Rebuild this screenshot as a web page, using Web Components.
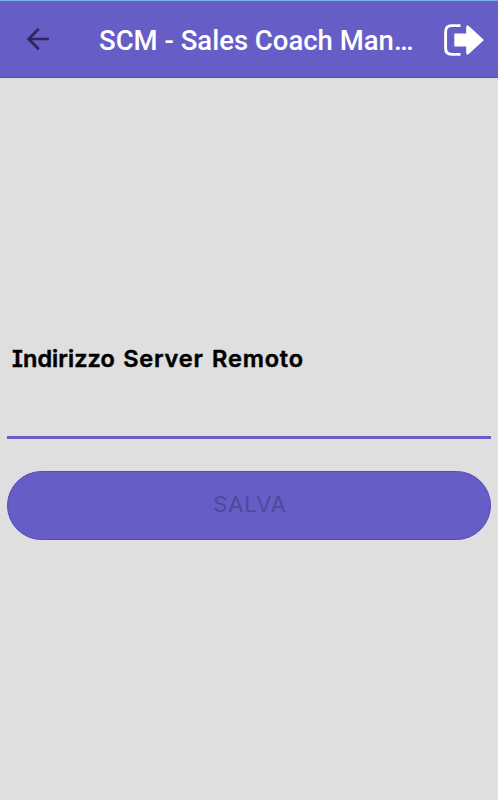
<!DOCTYPE html>
<html lang="it">
<head>
<meta charset="utf-8">
<meta name="viewport" content="width=device-width, initial-scale=1">
<title>SCM - Sales Coach Manager</title>
<style>
  body { margin: 0; background: #dfdfdf; }
</style>
</head>
<body>
<scm-screen>
  <app-bar slot="header">SCM - Sales Coach Manager</app-bar>
  <text-field><span>Indirizzo</span> Server Remoto</text-field>
  <pill-button>SALVA</pill-button>
</scm-screen>

<template id="screen-template">
  <style>
    :host {
      --primary: #675dc6;
      --primary-dark: #5746bd;
      display: flex;
      flex-direction: column;
      height: 100vh;
      box-sizing: border-box;
      border-top: 1px solid #79b5e2;
      background: #dfdfdf;
      font-family: Inter, "Liberation Sans", sans-serif;
      overflow: hidden;
    }
    main {
      flex: 1;
      display: flex;
      flex-direction: column;
      gap: 32px;
      padding: 263px 7px 0;
    }
  </style>
  <slot name="header"></slot>
  <main><slot></slot></main>
</template>

<template id="bar-template">
  <style>
    :host {
      display: flex;
      align-items: center;
      height: 77px;
      box-sizing: border-box;
      padding: 0 13px 0 20px;
      background: var(--primary);
      border-bottom: 1px solid var(--primary-dark);
    }
    button {
      display: flex;
      flex: none;
      padding: 0;
      border: 0;
      background: none;
    }
    h1 {
      flex: none;
      width: 325px;
      margin: 3px 0 0 43px;
      color: #fff;
      font: 500 27.5px/36px Roboto, sans-serif;
      white-space: nowrap;
      overflow: hidden;
      text-overflow: ellipsis;
    }
    .exit { margin: 1px 0 0 auto; }
  </style>
  <button aria-label="Indietro">
    <svg width="36" height="36" viewBox="0 0 36 36" fill="none" stroke="#2d275a" stroke-width="2.7">
      <path d="M29 18H9M18.8 7.8L8.6 18L18.8 28.2"/>
    </svg>
  </button>
  <h1><slot></slot></h1>
  <button class="exit" aria-label="Esci">
    <svg width="42" height="34" viewBox="0 0 42 34">
      <path d="M17.5 2.6H8.7Q2.6 2.6 2.6 8.7V25.3Q2.6 31.4 8.7 31.4H17.5" fill="none" stroke="#fff" stroke-width="2.9"/>
      <path d="M12 10.5H23.2V4Q23.2 1.8 25.2 2.6L41 17L25.2 31.4Q23.2 32.2 23.2 30V23.5H12Q11.3 23.5 11.3 22.5V11.5Q11.3 10.5 12 10.5Z" fill="#fff"/>
    </svg>
  </button>
</template>

<template id="field-template">
  <style>
    :host { display: block; }
    label {
      display: block;
      padding-left: 5px;
      height: 36px;
      color: #000;
      font-weight: 600;
      font-size: 23.5px;
      line-height: 36px;
      letter-spacing: 0.85px;
      word-spacing: 1.6px;
      font-feature-settings: "cv08";
      white-space: nowrap;
      -webkit-text-stroke: 0.5px #000;
      paint-order: stroke fill;
      stroke-linejoin: round;
    }
    ::slotted(span) { letter-spacing: 0.05px; }
    input {
      display: block;
      width: 100%;
      height: 62px;
      box-sizing: border-box;
      padding: 0 5px;
      border: 0;
      border-bottom: 3px solid var(--primary);
      background: none;
      font: inherit;
      font-size: 22px;
      outline: none;
    }
  </style>
  <label for="value"><slot></slot></label>
  <input id="value" type="text">
</template>

<template id="button-template">
  <style>
    :host { display: block; }
    button {
      display: block;
      width: 100%;
      height: 69px;
      box-sizing: border-box;
      padding: 0 0 3px 2px;
      border: 1px solid var(--primary-dark);
      border-radius: 35px;
      background: var(--primary);
      color: #51489b;
      font-family: inherit;
      font-size: 22px;
      letter-spacing: 0.9px;
    }
  </style>
  <button type="button" disabled><slot></slot></button>
</template>

<script>
  class TemplateElement extends HTMLElement {
    constructor() {
      super();
      const template = document.getElementById(this.constructor.templateId);
      this.attachShadow({ mode: 'open' }).appendChild(template.content.cloneNode(true));
    }
  }

  class ScmScreen extends TemplateElement {
    static templateId = 'screen-template';
  }

  class AppBar extends TemplateElement {
    static templateId = 'bar-template';
  }

  class TextField extends TemplateElement {
    static templateId = 'field-template';
  }

  class PillButton extends TemplateElement {
    static templateId = 'button-template';
  }

  customElements.define('scm-screen', ScmScreen);
  customElements.define('app-bar', AppBar);
  customElements.define('text-field', TextField);
  customElements.define('pill-button', PillButton);
</script>
</body>
</html>
